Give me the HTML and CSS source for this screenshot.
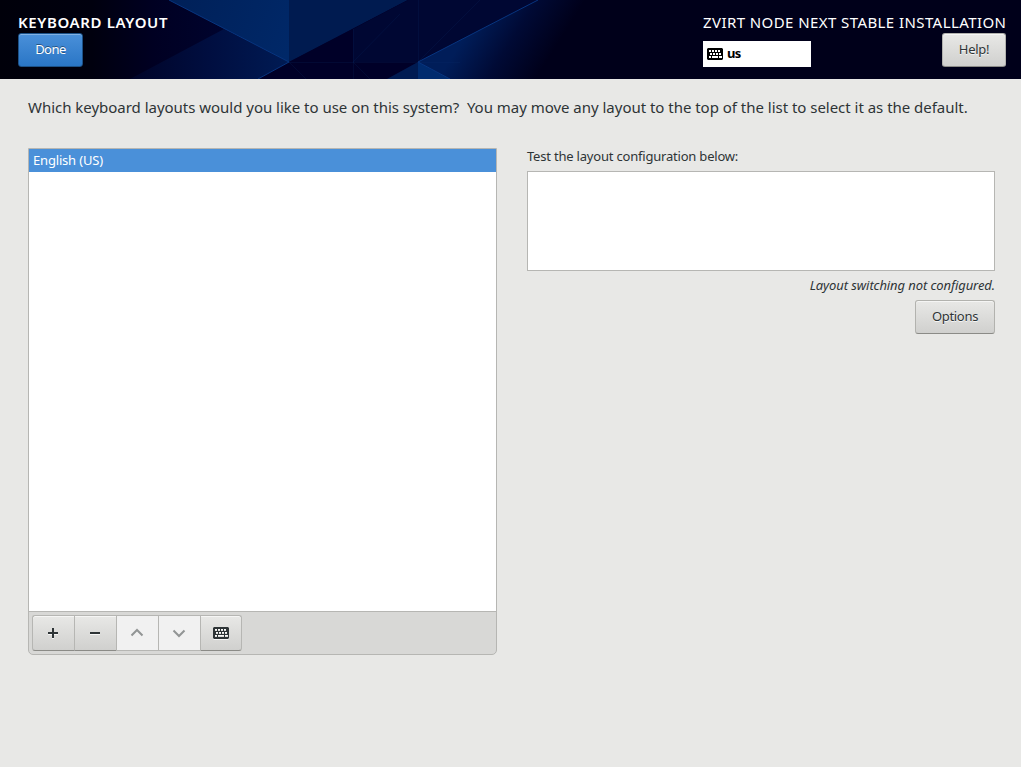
FILE: index.html
```html
<!DOCTYPE html>
<html lang="en">
<head>
    <meta charset="UTF-8">
    <meta name="viewport" content="width=device-width, initial-scale=1.0">
    <title>Keyboard Layout</title>
    <link rel="stylesheet" href="styles.css">
</head>
<body>
    <svg class="symbols" aria-hidden="true">
        <symbol id="icon-keyboard" viewBox="0 0 16 12">
            <path fill="currentColor" fill-rule="evenodd" d="M1 0h14l1 1v10l-1 1H1l-1-1V1zM2 2v2h2V2zM5 2v2h2V2zM8 2v2h2V2zM11 2v2h2V2zM3 5v2h2V5zM6 5v2h2V5zM9 5v2h2V5zM12 5v2h2V5zM2 8v2h2V8zM5 8v2h6V8zM12 8v2h3V8z"/>
        </symbol>
    </svg>

    <div class="header">
        <svg class="header-art" viewBox="0 0 1021 79" preserveAspectRatio="none" aria-hidden="true">
            <defs>
                <linearGradient id="base" x1="0" x2="1">
                    <stop offset="0" stop-color="#00000a"/>
                    <stop offset="0.09" stop-color="#00000e"/>
                    <stop offset="0.15" stop-color="#000022"/>
                    <stop offset="0.25" stop-color="#000533"/>
                    <stop offset="0.5" stop-color="#000533"/>
                    <stop offset="0.6" stop-color="#00001a"/>
                    <stop offset="1" stop-color="#00001a"/>
                </linearGradient>
                <linearGradient id="lower" gradientUnits="userSpaceOnUse" x1="130" y1="60" x2="289" y2="60">
                    <stop offset="0" stop-color="#000428"/>
                    <stop offset="0.5" stop-color="#000e40"/>
                    <stop offset="1" stop-color="#001b54"/>
                </linearGradient>
                <linearGradient id="upper" gradientUnits="userSpaceOnUse" x1="170" y1="0" x2="289" y2="50">
                    <stop offset="0" stop-color="#002058"/>
                    <stop offset="1" stop-color="#002868"/>
                </linearGradient>
                <linearGradient id="fade" gradientUnits="userSpaceOnUse" x1="455" y1="52" x2="525" y2="96">
                    <stop offset="0" stop-color="#001d59"/>
                    <stop offset="0.5" stop-color="#000a35"/>
                    <stop offset="1" stop-color="#00001a"/>
                </linearGradient>
            </defs>
            <rect width="1021" height="79" fill="url(#base)"/>
            <path fill="url(#lower)" d="M224 29L289 62L258 79H130z"/>
            <path fill="url(#upper)" d="M169 0H289V62z"/>
            <path fill="#001b50" d="M289 0H408L289 62z"/>
            <path fill="#000028" d="M408 0L289 62L258 79H387L418 62V0z"/>
            <path fill="#000733" d="M408 0H538L418 62L353 62V29z"/>
            <path fill="url(#fade)" d="M538 0H620V79H450L418 62z"/>
            <path fill="#001b52" d="M418 62V79H387z"/>
            <path fill="#002b6e" d="M418 62L450 79H418z"/>
            <path fill="none" stroke="#07357f" d="M169 0L289 62L258 79M538 0L418 62L450 79"/>
            <path fill="none" stroke="#0a3070" stroke-opacity=".18" d="M289 62.5H460M353.5 29V79M418.5 0V62M353 62L400 14M353 62L370 79M289 62L306 79M418 62L480 0"/>
        </svg>
        <div class="header-left">
            <h1>KEYBOARD LAYOUT</h1>
            <button type="button" class="btn btn-primary">Done</button>
        </div>
        <div class="header-right">
            <div class="product">ZVIRT NODE NEXT STABLE INSTALLATION</div>
            <div class="header-tools">
                <div class="layout-indicator">
                    <svg class="icon-keyboard"><use href="#icon-keyboard"/></svg>
                    <span>us</span>
                </div>
                <button type="button" class="btn btn-help">Help!</button>
            </div>
        </div>
    </div>

    <div class="content">
        <p class="intro">Which keyboard layouts would you like to use on this system?&nbsp; You may move any layout to the top of the list to select it as the default.</p>

        <div class="columns">
            <div class="layouts">
                <ul class="layout-list">
                    <li class="selected"><span>English (US)</span></li>
                </ul>
                <div class="toolbar">
                    <button type="button" class="tool" aria-label="Add layout">
                        <svg viewBox="0 0 16 16"><path d="M8 3v10M3 8h10"/></svg>
                    </button>
                    <button type="button" class="tool" aria-label="Remove layout">
                        <svg viewBox="0 0 16 16"><path d="M3 8h10"/></svg>
                    </button>
                    <button type="button" class="tool" aria-label="Move up" disabled>
                        <svg viewBox="0 0 16 16"><path d="M2.5 10.5L8 5L13.5 10.5"/></svg>
                    </button>
                    <button type="button" class="tool" aria-label="Move down" disabled>
                        <svg viewBox="0 0 16 16"><path d="M2.5 5.5L8 11L13.5 5.5"/></svg>
                    </button>
                    <button type="button" class="tool" aria-label="Preview layout">
                        <svg class="icon-keyboard"><use href="#icon-keyboard"/></svg>
                    </button>
                </div>
            </div>

            <div class="testing">
                <label for="layout-test">Test the layout configuration below:</label>
                <textarea id="layout-test"></textarea>
                <div class="switching"><span>Layout switching not configured.</span></div>
                <button type="button" class="btn btn-options">Options</button>
            </div>
        </div>
    </div>
</body>
</html>
```
FILE: styles.css
```css
* {
    box-sizing: border-box;
}
body {
    margin: 0;
    min-height: 767px;
    background-color: #e8e8e6;
    color: #2e3436;
    font-family: 'Noto Sans', 'Open Sans', sans-serif;
    font-size: 13px;
    line-height: 18px;
}
.symbols {
    position: absolute;
    width: 0;
    height: 0;
}
.header {
    position: relative;
    display: flex;
    justify-content: space-between;
    height: 79px;
    padding: 12px 15px 0 18px;
    background-color: #00001a;
    color: #fff;
}
.header-art {
    position: absolute;
    top: 0;
    left: 0;
    width: 100%;
    height: 100%;
}
.header-left, .header-right {
    position: relative;
}
.header-right {
    width: 303px;
}
.header h1 {
    margin: 0;
    font-size: 15px;
    font-weight: 600;
    line-height: 21px;
    letter-spacing: 0.62px;
    white-space: nowrap;
}
.product {
    font-size: 15px;
    line-height: 21px;
    letter-spacing: 0.42px;
    white-space: nowrap;
}
.header-tools {
    display: flex;
    justify-content: space-between;
    align-items: flex-end;
}
.layout-indicator {
    display: flex;
    align-items: center;
    gap: 4px;
    width: 108px;
    height: 26px;
    padding-left: 4px;
    background-color: #fff;
    color: #000;
    font-weight: 700;
    letter-spacing: -0.6px;
}
.layout-indicator span {
    padding-bottom: 2px;
}
.icon-keyboard {
    display: block;
    width: 16px;
    height: 12px;
}
.btn {
    display: block;
    height: 34px;
    padding: 0 0 2px;
    border: 1px solid #b2b2ae;
    border-bottom-color: #8b8b87;
    border-radius: 3px;
    background: linear-gradient(#e8e8e6, #d0d0ce);
    box-shadow: inset 0 1px #f5f5f4;
    color: #2e3436;
    font: inherit;
    letter-spacing: -0.3px;
    text-shadow: 0 1px rgba(255, 255, 255, 0.77);
}
.btn-primary {
    width: 65px;
    border-color: #1c5187;
    background: linear-gradient(#4a90d9, #2a76c6);
    box-shadow: inset 0 1px #80b1e4;
    color: #fff;
    letter-spacing: -0.5px;
    text-shadow: 0 -1px rgba(0, 0, 0, 0.4);
}
.btn-help {
    width: 64px;
}
.btn-options {
    width: 80px;
}
.content {
    padding: 18px 26px 0 28px;
}
.intro {
    margin: 0;
    font-size: 15px;
    line-height: 21px;
    letter-spacing: -0.022px;
    white-space: nowrap;
}
.columns {
    display: grid;
    grid-template-columns: 469px 468px;
    gap: 30px;
    margin-top: 30px;
}
.layouts {
    display: flex;
    flex-direction: column;
    height: 507px;
    border: 1px solid #b6b6b3;
    border-radius: 0 0 5px 5px;
    background-color: #d8d8d6;
}
.layout-list {
    flex: 1;
    margin: 0;
    padding: 0;
    border-bottom: 1px solid #b6b6b3;
    background-color: #fff;
    list-style: none;
}
.layout-list li {
    height: 23px;
    padding-left: 4px;
    line-height: 22px;
    letter-spacing: -0.18px;
}
.layout-list .selected {
    background-color: #4a90d9;
    color: #fff;
}
.toolbar {
    display: flex;
    padding: 3px;
}
.tool {
    display: flex;
    align-items: center;
    justify-content: center;
    width: 42px;
    height: 36px;
    padding: 0 1px 0 0;
    border: 1px solid #b6b6b3;
    border-right: 0;
    border-bottom-color: #8b8b87;
    background: linear-gradient(#e8e8e6, #d0d0ce);
    box-shadow: inset 0 1px #f5f5f4;
    color: #2e3436;
}
.tool:first-child {
    border-radius: 3px 0 0 3px;
}
.tool:last-child {
    padding: 0;
    border-right: 1px solid #b6b6b3;
    border-radius: 0 3px 3px 0;
}
.tool svg {
    filter: drop-shadow(0 1px rgba(255, 255, 255, 0.77));
}
.tool svg:not(.icon-keyboard) {
    width: 16px;
    height: 16px;
    fill: none;
    stroke: currentColor;
    stroke-width: 2;
}
.tool:disabled {
    border-bottom-color: #b6b6b3;
    background: #f1f1f1;
    box-shadow: none;
    color: #929595;
}
.tool:disabled svg {
    filter: none;
}
.testing {
    display: flex;
    flex-direction: column;
    align-items: flex-end;
}
.testing label {
    align-self: flex-start;
    line-height: 17px;
    letter-spacing: -0.2px;
}
.testing textarea {
    width: 100%;
    height: 100px;
    margin: 6px 0 5px;
    border: 1px solid #b6b6b3;
    background-color: #fff;
    resize: none;
}
.switching {
    margin-bottom: 6px;
    font-style: italic;
    letter-spacing: -0.09px;
}
```
